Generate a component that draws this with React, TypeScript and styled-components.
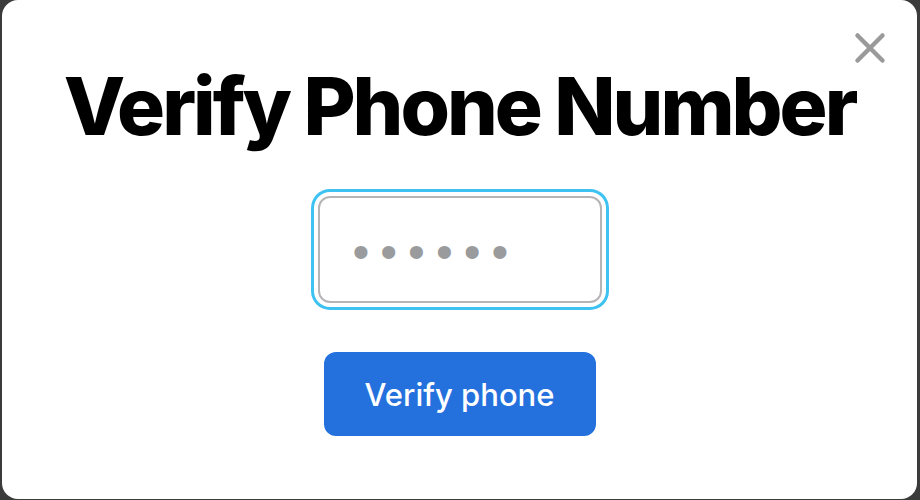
import styled, { createGlobalStyle } from "styled-components";

const GlobalStyle = createGlobalStyle`
  html, body {
    margin: 0;
    padding: 0;
    background-color: #3b3b3b;
    font-family: Inter, "Liberation Sans", sans-serif;
  }
`;

const Backdrop = styled.div`
  width: 920px;
  height: 500px;
  padding: 0 3px 1px 2px;
  box-sizing: border-box;
  background-color: #3b3b3b;
`;

const Modal = styled.div`
  position: relative;
  height: 100%;
  background-color: white;
  border-radius: 16px;
  display: flex;
  flex-direction: column;
  align-items: center;
  padding-top: 66px;
  box-sizing: border-box;
`;

const Close = styled.button`
  position: absolute;
  top: 32px;
  right: 31px;
  width: 32px;
  height: 32px;
  padding: 0;
  border: none;
  background: none;
  cursor: pointer;
  svg {
    display: block;
  }
`;

const Title = styled.h1`
  margin: 0;
  font-size: 80px;
  line-height: 1;
  font-weight: 800;
  letter-spacing: -3px;
  color: #000;
`;

const CodeInput = styled.input`
  margin-top: 50px;
  width: 284px;
  height: 107px;
  box-sizing: border-box;
  border: 2px solid #b5b5b7;
  border-radius: 12px;
  padding: 3px 0 0 33px;
  font-family: "Liberation Sans", sans-serif;
  font-size: 48px;
  letter-spacing: 11px;
  outline: none;
  box-shadow: 0 0 0 4px #fff, 0 0 0 7px #3ec2f2;
  &::placeholder {
    color: #9a9b9d;
  }
`;

const VerifyBtn = styled.button`
  margin-top: 49px;
  width: 272px;
  height: 84px;
  border: none;
  border-radius: 12px;
  background-color: #2471de;
  color: white;
  font-family: Inter, "Liberation Sans", sans-serif;
  font-size: 31px;
  font-weight: 500;
  cursor: pointer;
`;

const App = () => {
  return (
    <>
      <GlobalStyle />
      <Backdrop>
        <Modal>
          <Close aria-label="Close">
            <svg width="32" height="32" viewBox="0 0 32 32">
              <path
                d="M3.5 3.5L28.5 28.5M28.5 3.5L3.5 28.5"
                stroke="#9a9a9a"
                strokeWidth="4.5"
                strokeLinecap="round"
              />
            </svg>
          </Close>
          <Title>Verify Phone Number</Title>
          <CodeInput placeholder="••••••" />
          <VerifyBtn>Verify phone</VerifyBtn>
        </Modal>
      </Backdrop>
    </>
  );
};

export default App;
